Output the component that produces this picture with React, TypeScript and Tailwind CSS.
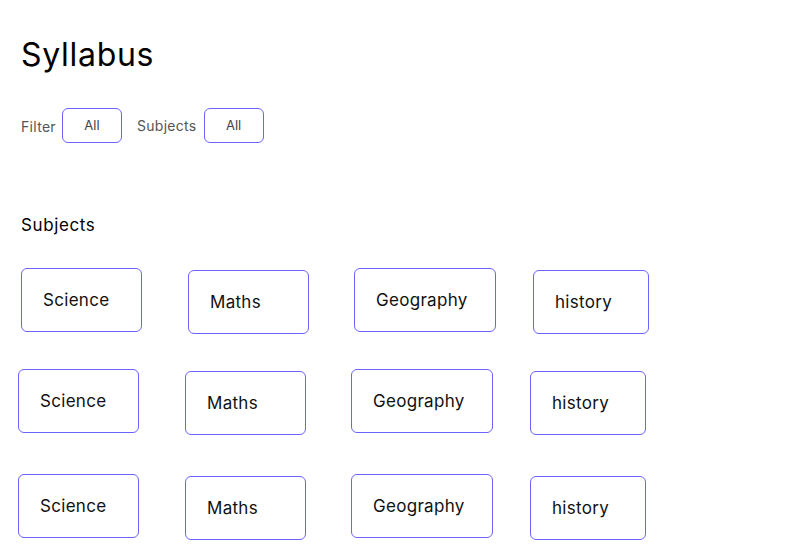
const subjects = [
  { name: "Science", w: "w-[121px]", shift: "", gap: "" },
  { name: "Maths", w: "w-[121px]", shift: "mt-[2px]", gap: "ml-[46px]" },
  { name: "Geography", w: "w-[142px]", shift: "", gap: "ml-[45px]" },
  { name: "history", w: "w-[116px]", shift: "mt-[2px]", gap: "ml-[37px]" },
];

function SubjectRow({ className }: { className: string }) {
  return (
    <div className={`flex items-start ${className}`}>
      {subjects.map((s) => (
        <div
          key={s.name}
          className={`flex h-[64px] shrink-0 items-center rounded-[6px] border border-[#6b63ff] pl-[21px] pt-[2px] text-[17px] tracking-[0.3px] text-[#111] ${s.w} ${s.shift} ${s.gap}`}
        >
          {s.name}
        </div>
      ))}
    </div>
  );
}

export default function App() {
  return (
    <div
      className="min-h-[547px] bg-white text-black"
      style={{ fontFamily: "Inter, 'Noto Sans', sans-serif" }}
    >
      <div className="pl-[21px] pt-[34px]">
        <h1 className="text-[32px] leading-[42px] font-normal tracking-[0.7px]">Syllabus</h1>

        <div className="mt-[32px] flex items-center text-[14px] tracking-[0.3px] text-[#555]">
          <span className="mt-[2px]">Filter</span>
          <button className="ml-[6px] h-[35px] w-[60px] rounded-[6px] border border-[#6b63ff] text-[13px] tracking-normal text-[#444]">
            All
          </button>
          <span className="ml-[15px]">Subjects</span>
          <button className="ml-[7px] h-[35px] w-[60px] rounded-[6px] border border-[#6b63ff] text-[13px] tracking-normal text-[#444]">
            All
          </button>
        </div>

        <h2 className="mt-[70px] text-[17px] leading-[24px] tracking-[0.6px]">Subjects</h2>
      </div>

      <SubjectRow className="ml-[21px] mt-[31px]" />
      <SubjectRow className="ml-[18px] mt-[35px]" />
      <SubjectRow className="ml-[18px] mt-[39px]" />

      <div className="mt-[7px] h-px bg-[#f1f1f1]" />
    </div>
  );
}
